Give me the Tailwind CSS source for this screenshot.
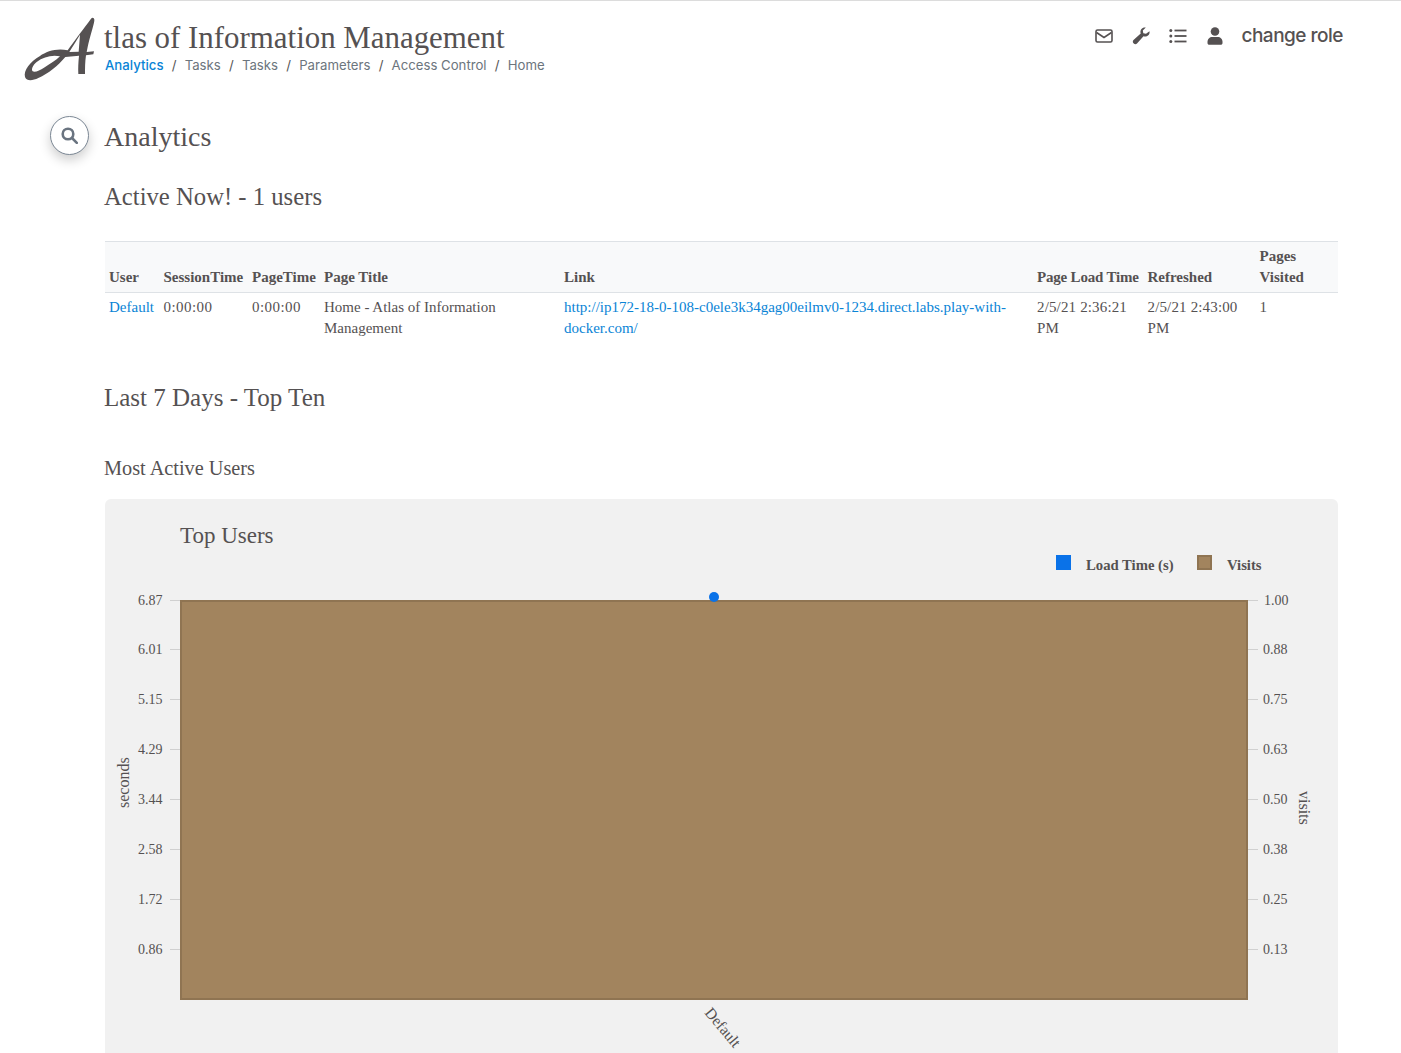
<!DOCTYPE html>
<html lang="en">
<head>
  <meta charset="UTF-8">
  <title>Analytics - Atlas of Information Management</title>
  <script src="https://cdn.jsdelivr.net/npm/@tailwindcss/browser@4"></script>
</head>
<body class="h-[1053px] overflow-hidden bg-white text-[#555152] font-['Liberation_Serif',serif]">
  <!-- header -->
  <header class="flex justify-between border-t border-[#dcdcdc] h-[91px] pl-[20px] pr-[58px]">
    <div class="flex pt-[11px] items-start">
      <svg class="w-[84px] h-[72px] mr-[1px]" viewBox="0 0 252 216">
        <path fill="#555152" fill-rule="evenodd" d="M213 20C195 45 160 90 143 115C110 108 80 118 60 132C30 150 10 175 15 195C20 208 38 206 55 198C85 185 115 160 136 135L177 131C175 150 174 170 175 186L195 186C195 170 195 150 198 130L220 127L222 118L200 120L203 105C208 80 221 40 223 26C224 17 217 15 213 20ZM180 68L176 119L148 120C158 103 170 85 180 68ZM120 133C95 128 70 135 50 150C38 160 33 172 38 178C45 182 60 175 72 167C90 155 108 145 120 133Z"/>
      </svg>
      <div class="pt-[5px]">
        <div class="text-[30.900px] leading-[42px] -ml-px">tlas of Information Management</div>
        <nav class="flex font-['Inter',sans-serif] text-[13.200px] leading-[16px] -mt-[2px] text-[#6c757d]">
          <a class="text-[#0a84d6] font-medium">Analytics</a><span class="mx-[8.200px] text-[#555]">/</span>
          <a>Tasks</a><span class="mx-[8.200px] text-[#555]">/</span>
          <a>Tasks</a><span class="mx-[8.200px] text-[#555]">/</span>
          <a>Parameters</a><span class="mx-[8.200px] text-[#555]">/</span>
          <a>Access Control</a><span class="mx-[8.200px] text-[#555]">/</span>
          <a>Home</a>
        </nav>
      </div>
    </div>
    <div class="flex items-center h-[70px] gap-[19px] font-['Inter',sans-serif]">
      <svg class="w-[18px] h-[18px]" viewBox="0 0 18 18" fill="none" stroke="#555152" stroke-width="1.600"><rect x="1" y="3" width="16" height="12" rx="1.500"/><path d="M1.500 5.500 9 10.500l7.500-5"/></svg>
      <svg class="w-[18px] h-[18px]" viewBox="0 0 18 18" fill="#555152"><path d="M17.500 4.200c.3 1.400-.1 3-1.200 4.100-1.300 1.300-3.200 1.600-4.800 1L5 16.500c-.9.900-2.300.9-3.200 0l-.3-.3c-.9-.9-.9-2.300 0-3.200l7.200-6.500c-.6-1.600-.3-3.500 1-4.800C10.800.6 12.400.2 13.800.5l-3 3 .5 2.700 2.700.5z"/></svg>
      <svg class="w-[18px] h-[18px]" viewBox="0 0 18 18" fill="#555152"><circle cx="1.800" cy="3.500" r="1.500"/><circle cx="1.800" cy="9" r="1.500"/><circle cx="1.800" cy="14.500" r="1.500"/><rect x="5.500" y="2.600" width="12" height="1.800"/><rect x="5.500" y="8.100" width="12" height="1.800"/><rect x="5.500" y="13.600" width="12" height="1.800"/></svg>
      <svg class="w-[18px] h-[18px]" viewBox="0 0 18 18" fill="#555152"><circle cx="9" cy="4.500" r="4.300"/><path d="M1.500 15c0-3 2-5 5-5h5c3 0 5 2 5 5v1c0 1-.8 1.800-1.800 1.800H3.300c-1 0-1.800-.8-1.800-1.800z"/></svg>
      <span class="-ml-[2px] text-[19px] tracking-[-0.500px] font-medium">change role</span>
    </div>
  </header>

  <main class="pl-[105px] pr-[63px] relative">
    <!-- search button -->
    <button class="absolute left-[50px] top-[25px] w-[39px] h-[39px] rounded-full bg-white border border-[#7b8794] shadow-[0_5px_12px_rgba(0,0,0,0.2)] flex items-center justify-center">
      <svg class="w-[17px] h-[17px]" viewBox="0 0 17 17" fill="none" stroke="#6a7480" stroke-width="2.600"><circle cx="7" cy="7" r="5.300"/><path d="m11 11 4.800 4.800" stroke-linecap="round"/></svg>
    </button>

    <h1 class="text-[28px] leading-[36px] pt-[28px] -ml-px">Analytics</h1>
    <h2 class="text-[24.700px] leading-[32px] mt-[26px] -ml-px">Active Now! - 1 users</h2>

    <table class="w-[1233px] mt-[28px] table-fixed text-[15px] leading-[21px] border-collapse">
      <colgroup>
        <col class="w-[54.500px]"><col class="w-[88.500px]"><col class="w-[72px]"><col class="w-[240px]"><col class="w-[473px]"><col class="w-[110.500px]"><col class="w-[112px]"><col>
      </colgroup>
      <thead class="bg-[#f8f9fa] border-y border-[#dee2e6]">
        <tr class="h-[51px] align-bottom font-bold text-left">
          <th class="px-[4px] pb-[4px]">User</th>
          <th class="px-[4px] pb-[4px]">SessionTime</th>
          <th class="px-[4px] pb-[4px]">PageTime</th>
          <th class="px-[4px] pb-[4px]">Page Title</th>
          <th class="px-[4px] pb-[4px]">Link</th>
          <th class="px-[4px] pb-[4px] whitespace-nowrap tracking-[-0.200px]">Page Load Time</th>
          <th class="px-[4px] pb-[4px]">Refreshed</th>
          <th class="px-[4px] pb-[4px]">Pages Visited</th>
        </tr>
      </thead>
      <tbody>
        <tr class="align-top">
          <td class="px-[4px] pt-[4px] text-[#0a84d6]">Default</td>
          <td class="px-[4px] pt-[4px] tracking-[0.450px]">0:00:00</td>
          <td class="px-[4px] pt-[4px] tracking-[0.450px]">0:00:00</td>
          <td class="px-[4px] pt-[4px]">Home - Atlas of Information Management</td>
          <td class="px-[4px] pt-[4px] text-[#0a84d6] break-words">http://ip172-18-0-108-c0ele3k34gag00eilmv0-1234.direct.labs.play-with-docker.com/</td>
          <td class="px-[4px] pt-[4px] tracking-[0.150px]">2/5/21 2:36:21 PM</td>
          <td class="px-[4px] pt-[4px] tracking-[0.150px]">2/5/21 2:43:00 PM</td>
          <td class="px-[4px] pt-[4px]">1</td>
        </tr>
      </tbody>
    </table>

    <h2 class="text-[25px] leading-[32px] mt-[43px] -ml-px">Last 7 Days - Top Ten</h2>
    <h3 class="text-[20.300px] leading-[26px] mt-[41px] -ml-px">Most Active Users</h3>

    <!-- chart -->
    <div class="mt-[18px] w-[1233px] h-[600px] rounded-t-[6px] bg-[#f1f1f1]">
      <svg class="block" width="1233" height="600" viewBox="105 499 1233 600" font-family="'Liberation Serif', serif" fill="#555152">
        <text x="180" y="543" font-size="23">Top Users</text>
        <rect x="1056" y="555" width="15" height="15" fill="#0a72e8"/>
        <text x="1086" y="570" font-size="14.700" font-weight="bold">Load Time (s)</text>
        <rect x="1198" y="556" width="13" height="13" fill="#a2845e" stroke="#8f7452" stroke-width="2"/>
        <text x="1227" y="570" font-size="14.700" font-weight="bold">Visits</text>

        <g stroke="#d0d0d0" stroke-width="1">
          <path d="M170 600.500h11M170 649.500h11M170 699.500h11M170 749.500h11M170 799.500h11M170 849.500h11M170 899.500h11M170 949.500h11"/>
          <path d="M1247 600.500h11M1247 649.500h11M1247 699.500h11M1247 749.500h11M1247 799.500h11M1247 849.500h11M1247 899.500h11M1247 949.500h11"/>
        </g>
        <g font-size="14" text-anchor="start">
          <text x="138" y="605">6.87</text>
          <text x="138" y="654">6.01</text>
          <text x="138" y="704">5.15</text>
          <text x="138" y="754">4.29</text>
          <text x="138" y="804">3.44</text>
          <text x="138" y="854">2.58</text>
          <text x="138" y="904">1.72</text>
          <text x="138" y="954">0.86</text>
          <text x="1264" y="605">1.00</text>
          <text x="1263" y="654">0.88</text>
          <text x="1263" y="704">0.75</text>
          <text x="1263" y="754">0.63</text>
          <text x="1263" y="804">0.50</text>
          <text x="1263" y="854">0.38</text>
          <text x="1263" y="904">0.25</text>
          <text x="1263" y="954">0.13</text>
        </g>
        <text transform="translate(129 808) rotate(-90)" font-size="16">seconds</text>
        <text transform="translate(1299 791) rotate(90)" font-size="16">visits</text>

        <rect x="181" y="601" width="1066" height="398" fill="#a2845e" stroke="#8f7452" stroke-width="2"/>
        <circle cx="714" cy="597" r="5" fill="#0a72e8"/>
        <text transform="translate(704 1013) rotate(50)" font-size="15.500">Default</text>
      </svg>
    </div>
  </main>
</body>
</html>
